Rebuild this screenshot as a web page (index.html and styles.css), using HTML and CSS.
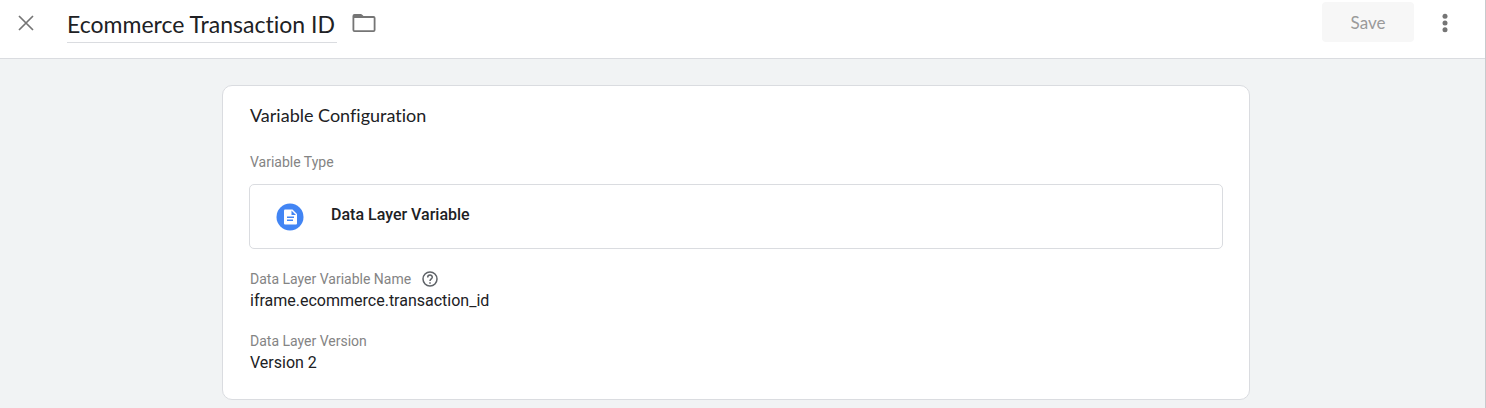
FILE: index.html
```html
<!DOCTYPE html>
<html lang="en">
<head>
<meta charset="utf-8">
<meta name="viewport" content="width=device-width, initial-scale=1">
<title>Ecommerce Transaction ID</title>
<link rel="stylesheet" href="styles.css">
</head>
<body>
<div class="sheet">
  <header class="toolbar">
    <button class="icon-button" type="button" aria-label="Close">
      <svg width="16" height="16" viewBox="0 0 16 16"><path d="M1 1l14 14M15 1L1 15" fill="none" stroke="currentColor" stroke-width="1.7"/></svg>
    </button>
    <input class="title" type="text" value="Ecommerce Transaction ID" aria-label="Variable name">
    <button class="icon-button folder" type="button" aria-label="Move to folder">
      <svg width="24" height="20" viewBox="0 0 24 20"><path fill="currentColor" fill-rule="evenodd" d="M2.500 1h6.200a2 2 0 0 1 1.500.700L11.500 3h10a2 2 0 0 1 2 2v12a2 2 0 0 1-2 2h-19a2 2 0 0 1-2-2V3a2 2 0 0 1 2-2zM2.300 5v12.200h19.400V5z"/></svg>
    </button>
    <button class="save" type="button" disabled>Save</button>
    <button class="icon-button more" type="button" aria-label="More actions">
      <svg width="6" height="20" viewBox="0 0 6 20" fill="currentColor"><circle cx="3" cy="3.200" r="2.500"/><circle cx="3" cy="10" r="2.500"/><circle cx="3" cy="16.800" r="2.500"/></svg>
    </button>
  </header>
  <main class="content">
    <section class="card">
      <h2 class="card-title">Variable Configuration</h2>
      <div class="label">Variable Type</div>
      <button class="type" type="button">
        <svg class="type-icon" width="28" height="28" viewBox="0 0 28 28">
          <circle cx="14" cy="14" r="13.500" fill="#4285f4"/>
          <path fill="#fff" d="M9 6.500h7.500L21 11v9.500a1 1 0 0 1-1 1H9a1 1 0 0 1-1-1v-13a1 1 0 0 1 1-1z"/>
          <path fill="#4285f4" d="M15.500 7.500V12H20zM11 13.500h7V15h-7zM11 16.500h6V18h-6z"/>
        </svg>
        <span>Data Layer Variable</span>
      </button>
      <dl class="fields">
        <div class="field">
          <dt class="label">Data Layer Variable Name
            <button class="help" type="button" aria-label="Help">
              <svg width="16" height="16" viewBox="0 0 16 16" fill="none" stroke="currentColor" stroke-width="1.500"><circle cx="8" cy="8" r="7"/><path d="M5.700 6.500C5.700 3.300 10.300 3.300 10.300 6.300C10.300 7.900 8 8 8 10"/><path d="M8 11.200v1.500"/></svg>
            </button>
          </dt>
          <dd class="value">iframe.ecommerce.transaction_id</dd>
        </div>
        <div class="field">
          <dt class="label">Data Layer Version</dt>
          <dd class="value">Version 2</dd>
        </div>
      </dl>
    </section>
  </main>
</div>
</body>
</html>
```
FILE: styles.css
```css
* { box-sizing: border-box; }

body {
  margin: 0;
  background: #f1f3f4;
  color: #202124;
  font-family: Roboto, "Liberation Sans", sans-serif;
}

.sheet {
  min-height: 100vh;
  border-right: 1px solid #c8cacd;
}

button {
  font: inherit;
  color: inherit;
  border: 0;
  padding: 0;
  background: none;
}

svg { display: block; }

.toolbar {
  display: flex;
  align-items: flex-start;
  height: 59px;
  padding: 2px 37px 0 18px;
  background: #fff;
  border-bottom: 1px solid #dadce0;
}

.icon-button {
  display: flex;
  align-items: center;
  justify-content: center;
  width: 16px;
  height: 42px;
  color: #757575;
}

.title {
  width: 270px;
  height: 41px;
  margin-left: 33px;
  padding: 4px 0 0;
  border: 0;
  border-bottom: 1px solid #dadce0;
  outline: 0;
  background: none;
  color: #202124;
  font-family: Lato, sans-serif;
  font-size: 23px;
  font-variant-ligatures: none;
}

.folder { width: 24px; margin-left: 15px; }

.save {
  width: 92px;
  height: 40px;
  margin-left: auto;
  border-radius: 4px;
  background: #f7f7f7;
  color: #9a9a9a;
  font-family: Lato, sans-serif;
  font-size: 17px;
}

.more { width: 6px; height: 42px; margin-left: 28px; }

.content { padding: 26px 235px 8px 222px; }

.card {
  padding: 18px 26px 24px;
  border: 1px solid #dadce0;
  border-radius: 10px;
  background: #fff;
}

.card-title {
  margin: 0 0 26px;
  padding-left: 1px;
  font-family: Lato, sans-serif;
  font-size: 18px;
  font-weight: 400;
  font-variant-ligatures: none;
  line-height: 22px;
}

.label {
  display: flex;
  align-items: center;
  gap: 11px;
  padding-left: 1px;
  color: #848484;
  font-size: 14px;
  line-height: 20px;
}

.type {
  display: flex;
  align-items: center;
  gap: 27px;
  width: 100%;
  height: 65px;
  margin: 12px 0 20px;
  padding: 0 26px;
  border: 1px solid #dadce0;
  border-radius: 5px;
  font-size: 16px;
  font-weight: 500;
}

.type span { padding-bottom: 4px; }

.fields { margin: 0; }

.field + .field { margin-top: 18px; }

.value {
  margin: 0;
  padding-left: 1px;
  font-size: 16px;
  line-height: 24px;
}

.help { color: #5f6368; }
```
